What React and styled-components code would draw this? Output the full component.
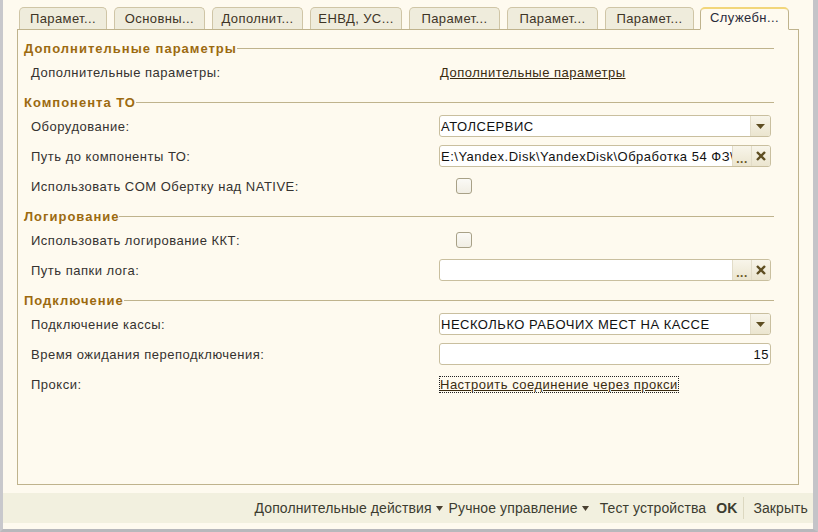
import React, { useState } from "react";
import styled, { createGlobalStyle } from "styled-components";

const CREAM = "#fefaef";
const TAN = "#bfb38d";
const HEAD = "#9c6a10";

const GlobalStyle = createGlobalStyle`
  html, body {
    margin: 0;
    padding: 0;
    background: ${CREAM};
  }
  body {
    font-family: "Liberation Sans", Arial, sans-serif;
    font-size: 13px;
    letter-spacing: 0.5px;
    color: #353230;
  }
  * {
    box-sizing: border-box;
  }
`;

const Window = styled.div`
  width: 818px;
  height: 532px;
  background: ${CREAM};
  border-left: 3px solid #c8c8cc;
  border-right: 5px solid #c4c4c8;
  border-bottom: 3px solid #b8b8bc;
  display: flex;
  flex-direction: column;
`;

const Notebook = styled.div`
  margin: 7px 0 0 14px;
  width: 782px;
  display: flex;
  flex-direction: column;
`;

const TabBar = styled.div`
  display: flex;
  align-items: flex-end;
  gap: 7px;
  padding-left: 2px;
  height: 23px;
  border-bottom: 1px solid ${TAN};
`;

const Tab = styled.div`
  position: relative;
  width: ${(p) => (p.$active ? 89 : p.$w || 89)}px;
  height: ${(p) => (p.$active ? 23 : 22)}px;
  margin-bottom: ${(p) => (p.$active ? -1 : 0)}px;
  margin-left: ${(p) => (p.$active ? -1 : 0)}px;
  display: flex;
  align-items: center;
  justify-content: center;
  border: 1px solid ${(p) => (p.$active ? TAN : "#cfc5a6")};
  border-top: ${(p) => (p.$active ? "2px solid #f2d67a" : "1px solid #cfc5a6")};
  border-bottom: ${(p) => (p.$active ? `1px solid ${CREAM}` : "none")};
  border-radius: 5px 5px 0 0;
  background: ${(p) => (p.$active ? CREAM : "#efecdc")};
  color: ${(p) => (p.$active ? "#2a2a3a" : "#3e3426")};
  padding-bottom: ${(p) => (p.$active ? 3 : 1)}px;
  letter-spacing: 0.4px;
  white-space: nowrap;
  cursor: default;
`;

const Panel = styled.div`
  height: 455px;
  border: 1px solid ${TAN};
  border-top: none;
  padding: 9px 24px 0 6px;
`;

const Heading = styled.div`
  display: flex;
  align-items: center;
  height: 18px;
  margin-top: ${(p) => (p.$first ? 0 : 6)}px;
  font-weight: bold;
  letter-spacing: 1px;
  color: ${HEAD};
  white-space: nowrap;

  &::after {
    content: "";
    flex: 1;
    border-top: 1px solid ${TAN};
  }
`;

const Row = styled.div`
  display: grid;
  grid-template-columns: 408px 332px;
  align-items: center;
  height: 30px;
  padding-left: 7px;
`;

const Label = styled.div`
  white-space: nowrap;
`;

const Field = styled.div`
  display: flex;
  align-items: stretch;
  height: 22px;
  background: #fff;
  border: 1px solid #c9bf9f;
  border-radius: 3px;
  overflow: hidden;
`;

const FieldText = styled.div`
  flex: 1;
  min-width: 0;
  display: flex;
  align-items: center;
  justify-content: ${(p) => (p.$right ? "flex-end" : "flex-start")};
  padding: 0 ${(p) => (p.$right ? 1 : 0)}px 0 1px;
  color: #111;
  white-space: nowrap;
  overflow: hidden;
`;

const FieldButton = styled.div`
  width: ${(p) => p.$w || 19}px;
  flex-shrink: 0;
  display: flex;
  align-items: center;
  justify-content: center;
  border-left: 1px solid #e2dcc8;
  background: linear-gradient(#f8f5ea, #ebe5cf);
  color: #6b5a28;
`;

const Dots = styled.span`
  font-weight: bold;
  font-size: 12px;
  letter-spacing: 0.5px;
  margin-top: 6px;
  color: #6b5a28;
`;

const Check = styled.div`
  width: 16px;
  height: 16px;
  margin-left: 17px;
  border: 1px solid #a8a187;
  border-radius: 3px;
  background: linear-gradient(#fbfaf6, #f1eee4);
`;

const Link = styled.a`
  justify-self: start;
  margin-left: 1px;
  color: #3a2b10;
  text-decoration: underline;
  white-space: nowrap;
  outline: ${(p) => (p.$focused ? "1px dotted #222" : "none")};
  outline-offset: 0;
  cursor: pointer;
`;

const Footer = styled.div`
  margin-top: 8px;
  height: 30px;
  background: #f2f0df;
  display: flex;
  align-items: center;
  justify-content: flex-end;
  padding-right: 5px;
  color: #3c3c30;
  font-size: 14px;
  letter-spacing: 0.1px;
`;

const FooterButton = styled.div`
  display: flex;
  align-items: center;
  gap: 4px;
  padding: 0 ${(p) => p.$pr ?? 3}px 0 ${(p) => p.$pl ?? 3}px;
  font-weight: ${(p) => (p.$bold ? "bold" : "normal")};
  white-space: nowrap;
  border-right: ${(p) => (p.$sep ? "1px solid #dcd8c0" : "none")};
  height: ${(p) => (p.$sep ? "22px" : "auto")};
  cursor: default;
`;

const Caret = () => (
  <svg width="7" height="5" viewBox="0 0 7 5">
    <path d="M0 0 H7 L3.5 5 Z" fill="#4a4030" />
  </svg>
);

const DropArrow = () => (
  <svg width="9" height="5" viewBox="0 0 9 5">
    <path d="M0 0 H9 L4.5 5 Z" fill="#5e4e22" />
  </svg>
);

const Cross = () => (
  <svg width="10" height="10" viewBox="0 0 10 10">
    <path d="M1 1 L9 9 M9 1 L1 9" stroke="#5e4e22" strokeWidth="2.4" />
  </svg>
);

const TABS = [
  "Парамет...",
  "Основны...",
  "Дополнит...",
  "ЕНВД, УС...",
  "Парамет...",
  "Парамет...",
  "Парамет...",
  "Служебн...",
];
const TAB_W = [88, 91, 91, 92, 91, 91, 89];

function Combo({ value }) {
  return (
    <Field>
      <FieldText>{value}</FieldText>
      <FieldButton $w={20}>
        <DropArrow />
      </FieldButton>
    </Field>
  );
}

function PathField({ value }) {
  return (
    <Field>
      <FieldText>{value}</FieldText>
      <FieldButton>
        <Dots>...</Dots>
      </FieldButton>
      <FieldButton $w={19}>
        <Cross />
      </FieldButton>
    </Field>
  );
}

export default function App() {
  const [tab, setTab] = useState(7);
  return (
    <Window>
      <GlobalStyle />
      <Notebook>
        <TabBar>
          {TABS.map((t, i) => (
            <Tab
              key={i}
              $active={tab === i}
              $w={TAB_W[i]}
              onClick={() => setTab(i)}
            >
              {t}
            </Tab>
          ))}
        </TabBar>
        <Panel>
          <Heading $first>Дополнительные параметры</Heading>
          <Row>
            <Label>Дополнительные параметры:</Label>
            <Link>Дополнительные параметры</Link>
          </Row>

          <Heading>Компонента ТО</Heading>
          <Row>
            <Label>Оборудование:</Label>
            <Combo value="АТОЛСЕРВИС" />
          </Row>
          <Row>
            <Label>Путь до компоненты ТО:</Label>
            <PathField value="E:\Yandex.Disk\YandexDisk\Обработка 54 ФЗ\" />
          </Row>
          <Row>
            <Label>Использовать COM Обертку над NATIVE:</Label>
            <Check />
          </Row>

          <Heading>Логирование</Heading>
          <Row>
            <Label>Использовать логирование ККТ:</Label>
            <Check />
          </Row>
          <Row>
            <Label>Путь папки лога:</Label>
            <PathField value="" />
          </Row>

          <Heading>Подключение</Heading>
          <Row>
            <Label>Подключение кассы:</Label>
            <Combo value="НЕСКОЛЬКО РАБОЧИХ МЕСТ НА КАССЕ" />
          </Row>
          <Row>
            <Label>Время ожидания переподключения:</Label>
            <Field>
              <FieldText $right>15</FieldText>
            </Field>
          </Row>
          <Row>
            <Label>Прокси:</Label>
            <Link $focused>Настроить соединение через прокси</Link>
          </Row>
        </Panel>
      </Notebook>
      <Footer>
        <FooterButton>
          Дополнительные действия <Caret />
        </FooterButton>
        <FooterButton>
          Ручное управление <Caret />
        </FooterButton>
        <FooterButton $pl={8} $pr={6}>
          Тест устройства
        </FooterButton>
        <FooterButton $bold $sep $pl={4} $pr={6}>
          OK
        </FooterButton>
        <FooterButton $pl={9} $pr={0}>
          Закрыть
        </FooterButton>
      </Footer>
    </Window>
  );
}
